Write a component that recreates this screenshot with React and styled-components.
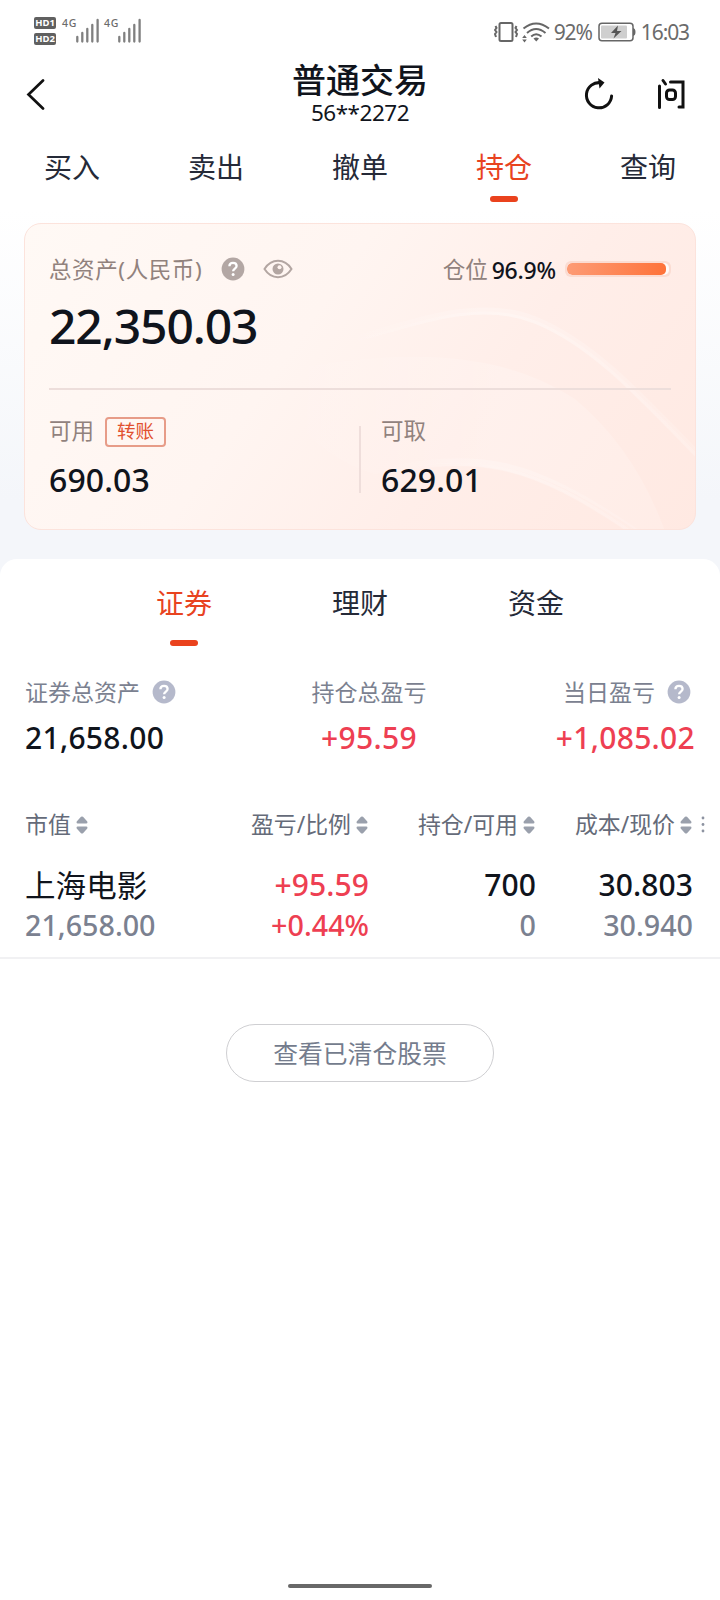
import React, { Fragment } from 'react';
import styled, { createGlobalStyle } from 'styled-components';

const GlobalStyle = createGlobalStyle`
  * { box-sizing: border-box; }
  body {
    margin: 0;
    background: #fff;
    color: #10141c;
    font-family: "Noto Sans", "Noto Sans CJK SC", sans-serif;
  }
`

const Page = styled.div`
  display: flex;
  flex-direction: column;
  width: 720px;
  height: 1600px;
  overflow: hidden;
  background: linear-gradient(180deg, #fff 210px, #f4f6fa 500px, #f4f6fa 600px);
`

const StatusBar = styled.div`
  display: flex;
  justify-content: space-between;
  height: 62px;
  padding: 0 31px 0 34px;
  color: #6b6b6b;
`

const StatusGroup = styled.div`
  display: flex;
  align-items: ${props => props.$align || 'flex-start'};
`

const HdStack = styled.div`
  display: flex;
  flex-direction: column;
  gap: 4px;
  padding-top: 17px;
`

const HdBadge = styled.span`
  width: 22px;
  height: 12px;
  border-radius: 2px;
  background: #606060;
  color: #fff;
  font-size: 9.5px;
  font-weight: 700;
  line-height: 12px;
  text-align: center;
`

const Network = styled.div`
  display: flex;
  width: 42px;
  padding: 17px 0 0 6px;
  margin-left: ${props => props.$left || 0}px;
  font-size: 10.5px;
  line-height: 12px;
  letter-spacing: 0.8px;
  font-weight: 500;
`

const StatusText = styled.span`
  font-size: 21px;
  line-height: 30px;
  letter-spacing: -1.1px;
  margin-left: ${props => props.$left};
`

const StatusIcons = styled(StatusGroup)`
  height: 62px;
  padding-top: 1px;
`

const Header = styled.header`
  display: grid;
  grid-template-columns: 160px 1fr 160px;
  height: 70px;
`

const HeaderSide = styled.div`
  display: flex;
  align-items: center;
  padding: ${props => props.$padding};
  gap: 40px;
`

const HeaderTitle = styled.div`
  display: flex;
  flex-direction: column;
  align-items: center;
`

const Title = styled.div`
  font-size: 34px;
  font-weight: 500;
  line-height: 36px;
`

const Account = styled.div`
  font-size: 22.5px;
  line-height: 30px;
  letter-spacing: -0.5px;
`

const Tabs = styled.nav`
  display: grid;
  grid-template-columns: repeat(${props => props.$count}, ${props => props.$width}px);
  justify-content: center;
  height: ${props => props.$height}px;
`

const Tab = styled.div`
  display: flex;
  flex-direction: column;
  align-items: center;
  gap: ${props => props.$gap}px;
  padding-top: ${props => props.$top}px;
  font-size: 28px;
  line-height: 32px;
  color: ${props => props.$active ? '#e8431f' : '#252a38'};

  &::after {
    content: '';
    width: 28px;
    height: 6px;
    border-radius: 3px;
    background: ${props => props.$active ? '#ea421d' : 'transparent'};
  }
`

const Card = styled.section`
  position: relative;
  height: 307px;
  margin: 0 24px;
  border: 1px solid #fce3dc;
  border-radius: 17px;
  padding: 0 24px;
  overflow: hidden;
  background: linear-gradient(125deg, #fff9f5 0%, #fff5f1 40%, #ffeee9 66%, #ffe9e2 100%);
`

const Waves = styled.svg`
  position: absolute;
  inset: 0;
`

const CardBody = styled.div`
  position: relative;
`

const CardTop = styled.div`
  display: flex;
  align-items: center;
  justify-content: space-between;
  height: 44px;
  margin-top: 23px;
`

const Row = styled.div`
  display: flex;
  align-items: center;
  gap: ${props => props.$gap || 0}px;
`

const CardLabel = styled.span`
  padding-top: 2px;
  font-size: 22.5px;
  line-height: 30px;
  letter-spacing: ${props => props.$spacing || 0};
  color: #91827d;
`

const CardIcons = styled(Row)`
  margin-left: 19px;
`

const Ratio = styled.span`
  font-size: 23px;
  font-weight: 500;
  line-height: 30px;
  letter-spacing: -0.2px;
  margin: 1px 9px 0 4px;
`

const Meter = styled.div`
  width: 106px;
  height: 16px;
  padding: 2px;
  border-radius: 6px;
  background: #fbdcd2;
`

const MeterTrack = styled.div`
  height: 12px;
  border-radius: 5px;
  background: #fffaf8;
  overflow: hidden;
`

const MeterFill = styled.div`
  height: 12px;
  border-radius: 5px;
  background: linear-gradient(100deg, #fd9c76, #fe7239);
`

const Total = styled.div`
  font-size: 48px;
  font-weight: 500;
  line-height: 60px;
  letter-spacing: -1.1px;
  margin: 5px 0 0;
`

const Divider = styled.div`
  height: 2px;
  margin-top: 32px;
  background: #eddedb;
`

const Halves = styled.div`
  display: grid;
  grid-template-columns: 310px 2px 1fr;
`

const HalfLine = styled.div`
  height: 67px;
  margin-top: 36px;
  background: #efdedb;
`

const Half = styled.div`
  padding: 24px 0 0 ${props => props.$left || 0}px;
`

const HalfLabel = styled(Row)`
  height: 34px;
  align-items: flex-start;
`

const Tag = styled.span`
  width: 61px;
  height: 30px;
  margin-top: 3px;
  border: 2px solid #e79c88;
  border-radius: 4px;
  color: #e1502f;
  font-size: 18.5px;
  line-height: 24px;
  text-align: center;
`

const HalfValue = styled.div`
  font-size: 32px;
  font-weight: 500;
  line-height: 40px;
  letter-spacing: 0.1px;
  margin-top: 12px;
`

const Sheet = styled.main`
  flex: 1;
  display: flex;
  flex-direction: column;
  align-items: stretch;
  margin-top: 29px;
  border-radius: 17px 17px 0 0;
  background: #fff;
`

const Stats = styled.div`
  display: grid;
  grid-template-columns: 228px 1fr 228px;
  height: 116px;
  padding: 1px 25px 0;
`

const Stat = styled.div`
  display: flex;
  flex-direction: column;
  align-items: ${props => props.$align};
  padding-left: ${props => props.$left || 0}px;
`

const StatLabel = styled(Row)`
  height: 30px;
  padding-right: ${props => props.$right || 0}px;
  font-size: 23px;
  line-height: 30px;
  color: #7b8190;
`

const StatValue = styled.div`
  font-size: 30px;
  font-weight: 500;
  line-height: 40px;
  margin-top: 11px;
  letter-spacing: 0.3px;
  color: ${props => props.$up ? '#ee3f52' : '#10141c'};
`

const Grid = styled.div`
  display: grid;
  grid-template-columns: 160px 183px 167px 157px 1fr;
  padding-left: 25px;
`

const HeadGrid = styled(Grid)`
  margin-top: 16px;
`

const HeadCell = styled(Row)`
  justify-content: ${props => props.$first ? 'flex-start' : 'flex-end'};
  height: 34px;
  font-size: 22.9px;
  line-height: 30px;
  color: #656b79;
`

const Holding = styled(Grid)`
  height: 117px;
  padding-top: 23px;
  border-bottom: 2px solid #f1f1f3;
`

const Cell = styled.div`
  text-align: ${props => props.$first ? 'left' : 'right'};
  margin-right: -1px;
  font-size: 30px;
  font-weight: 500;
  line-height: 40px;
  letter-spacing: 0.1px;
  white-space: nowrap;
  color: ${props => props.$up ? '#ee3f52' : '#10141c'};
`

const StockName = styled.div`
  font-size: 30.5px;
  font-weight: 400;
`

const SubValue = styled.div`
  font-size: 28.7px;
  letter-spacing: 0;
  color: ${props => props.$up ? '#ee3f52' : '#7b8190'};
`

const ClearedButton = styled.button`
  align-self: center;
  width: 268px;
  height: 58px;
  margin-top: 65px;
  padding: 0;
  border: 1px solid #cfcfd2;
  border-radius: 29px;
  background: #fff;
  color: #747c8d;
  font-family: inherit;
  font-size: 24.8px;
  line-height: 32px;
`

const HomeBar = styled.div`
  align-self: center;
  width: 144px;
  height: 4px;
  margin: auto 0 12px;
  border-radius: 2px;
  background: #686868;
`

const SignalWrap = styled.div`
  margin: 17px 0 0 -22px;
  width: 24px;
`

const Signal = () => (
  <SignalWrap>
    <svg width="24" height="26" viewBox="0 0 24 26">
      <path d="M1.300 20v4.500M6.300 16v8.500M11.300 12v12.500M16.300 8v16.500M21.600 3v21.500" stroke="#808080" strokeWidth="2.300" strokeLinecap="round" />
    </svg>
  </SignalWrap>
)

const Help = ({ color }) => (
  <svg width="24" height="24" viewBox="0 0 24 24">
    <circle cx="12" cy="12" r="11.400" fill={color} />
    <path d="M8.400 9.300c0-2.100 1.500-3.500 3.600-3.500s3.600 1.300 3.600 3.200c0 2.500-3.500 2.700-3.500 5.300" fill="none" stroke="#fff" strokeWidth="2.300" />
    <circle cx="12.100" cy="17.600" r="1.500" fill="#fff" />
  </svg>
)

const Eye = () => (
  <svg width="30" height="20" viewBox="0 0 30 20" fill="none">
    <path d="M1.500 10C5 4.500 9.500 1.800 15 1.800S25 4.500 28.500 10C25 15.500 20.500 18.200 15 18.200S5 15.500 1.500 10z" stroke="#b3a6a2" strokeWidth="2" />
    <circle cx="15" cy="10" r="5.500" fill="#b3a6a2" />
    <circle cx="16.500" cy="8.200" r="2" fill="#fff4f0" />
  </svg>
)

const Sort = () => (
  <svg width="12" height="18" viewBox="0 0 12 18" fill="#9aa0ac">
    <path d="M5 .8Q6 0 7 .8L11.300 5.500Q12 7.500 10.500 7.500H1.500Q0 7.500.7 5.500zM5 17.200Q6 18 7 17.200L11.300 12.500Q12 10.500 10.500 10.500H1.500Q0 10.500.7 12.500z" />
  </svg>
)

const MoreDots = styled.svg`
  margin: 7px 0 0 9px;
`

const DeviceIcons = () => (
  <svg width="56" height="22" viewBox="0 0 56 22" fill="none" stroke="#666">
    <rect x="5.500" y="2" width="13" height="18" rx="1.500" strokeWidth="2" />
    <path d="M1.500 5l1 2-1.500 2 1.500 2-1.500 2 1 3M22.500 5l-1 2 1.500 2-1.500 2 1.500 2-1 3" strokeWidth="2" />
    <path d="M29.500 7.500Q42 -2.500 55 7.500M33 12Q42 4 51.500 12M37.200 15.500Q42 11 47.500 15.500" strokeWidth="2" />
    <path d="M39.500 17.500Q42.300 15.500 45 17.500L42.300 20.500z" fill="#666" stroke="none" />
    <path d="M28.200 17l2.300-3 2.300 3zM28.200 18.500l2.300 3 2.300-3z" fill="#666" stroke="none" />
  </svg>
)

const BatteryWrap = styled.div`
  display: flex;
  margin: 0 5px 0 6px;
`

const Battery = () => (
  <BatteryWrap>
    <svg width="38" height="20" viewBox="0 0 38 20">
      <rect x="1" y="1.200" width="34" height="17.600" rx="3" fill="none" stroke="#666" strokeWidth="1.500" />
      <rect x="3" y="3.500" width="26" height="13" rx="1" fill="#cfcfcf" />
      <path d="M35 6q2.500.5 2.500 4T35 14z" fill="#666" />
      <path d="M20 3.500L13 11h4.500l-2 5.500L23.500 9H19z" fill="#555" />
    </svg>
  </BatteryWrap>
)

const CardWaves = () => (
  <Waves width="672" height="307" viewBox="0 0 672 307" fill="none">
    <defs>
      <linearGradient id="edge" x1="0" x2="1">
        <stop offset="0" stopColor="#fff" stopOpacity="0" />
        <stop offset=".45" stopColor="#fff" stopOpacity=".22" />
        <stop offset="1" stopColor="#fff" stopOpacity=".12" />
      </linearGradient>
      <linearGradient id="band" x1="0" x2="1">
        <stop offset="0" stopColor="#fff" stopOpacity="0" />
        <stop offset=".6" stopColor="#fff" stopOpacity=".18" />
        <stop offset="1" stopColor="#fff" stopOpacity=".14" />
      </linearGradient>
    </defs>
    <path d="M240 150C390 120 480 130 550 175Q610 225 640 307H612C500 233 450 229 350 250Q280 230 240 150z" fill="url(#band)" />
    <g stroke="url(#edge)">
      <path d="M310 121C400 95 455 74 510 96S610 166 672 230" strokeWidth="7" />
      <path d="M310 123C400 97 455 76 510 98S610 168 672 232" strokeWidth="3" />
      <path d="M350 249C450 228 500 232 614 311" strokeWidth="8" />
      <path d="M350 251C450 230 500 234 612 312" strokeWidth="3" />
    </g>
  </Waves>
)

const mainTabs = ['买入', '卖出', '撤单', '持仓', '查询'];
const assetTabs = ['证券', '理财', '资金'];
const columns = ['市值', '盈亏/比例', '持仓/可用', '成本/现价'];

const App = () => {
  const position = 96.9;

  const main_tabs = mainTabs.map((name, key) =>
    <Tab $active={key === 3} $top={19} $gap={13} key={key}>{name}</Tab>
  );

  const asset_tabs = assetTabs.map((name, key) =>
    <Tab $active={key === 0} $top={28} $gap={21} key={key}>{name}</Tab>
  );

  const head_cells = columns.map((name, key) =>
    <HeadCell $first={key === 0} $gap={5} key={key}>{name}<Sort /></HeadCell>
  );

  return (
    <Fragment>
      <GlobalStyle />
      <Page lang="zh-CN">
        <StatusBar>
          <StatusGroup>
            <HdStack>
              <HdBadge>HD1</HdBadge>
              <HdBadge>HD2</HdBadge>
            </HdStack>
            <Network>4G</Network>
            <Signal />
            <Network $left={-2}>4G</Network>
            <Signal />
          </StatusGroup>
          <StatusIcons $align="center">
            <DeviceIcons />
            <StatusText $left="4px">92%</StatusText>
            <Battery />
            <StatusText>16:03</StatusText>
          </StatusIcons>
        </StatusBar>

        <Header>
          <HeaderSide $padding="0 0 6px 26px">
            <svg width="20" height="32" viewBox="0 0 20 32" fill="none">
              <path d="M17 2.500L2.500 16.500L17 30.500" stroke="#111" strokeWidth="2.700" strokeLinecap="round" />
            </svg>
          </HeaderSide>
          <HeaderTitle>
            <Title>普通交易</Title>
            <Account>56**2272</Account>
          </HeaderTitle>
          <HeaderSide $padding="0 0 6px 23px">
            <svg width="32" height="34" viewBox="0 0 32 34" fill="none" stroke="#111" strokeWidth="3">
              <path d="M18 5.800A12.600 12.600 0 1 0 28.600 19" strokeLinecap="round" />
              <path d="M15 1L21.500 5.500 16.500 11.500z" fill="#111" stroke="none" />
            </svg>
            <svg width="32" height="34" viewBox="0 0 32 34" fill="none" stroke="#111" strokeWidth="3" strokeLinecap="round">
              <path d="M4.500 9v21.500M8 3.500l2.500 3.500M15.500 5H28V30H24" />
              <rect x="11.500" y="13" width="9" height="9.500" rx="3" />
            </svg>
          </HeaderSide>
        </Header>

        <Tabs $count={5} $width={144} $height={91}>{main_tabs}</Tabs>

        <Card>
          <CardWaves />
          <CardBody>
            <CardTop>
              <Row>
                <CardLabel $spacing="0.6px">总资产(人民币)</CardLabel>
                <CardIcons $gap={18}>
                  <Help color="#b3a7a4" />
                  <Eye />
                </CardIcons>
              </Row>
              <Row>
                <CardLabel>仓位</CardLabel>
                <Ratio>{position}%</Ratio>
                <Meter>
                  <MeterTrack>
                    <MeterFill style={{ width: `${position}%` }} />
                  </MeterTrack>
                </Meter>
              </Row>
            </CardTop>
            <Total>22,350.03</Total>
            <Divider />
            <Halves>
              <Half>
                <HalfLabel $gap={11}>
                  <CardLabel>可用</CardLabel>
                  <Tag>转账</Tag>
                </HalfLabel>
                <HalfValue>690.03</HalfValue>
              </Half>
              <HalfLine />
              <Half $left={20}>
                <HalfLabel><CardLabel>可取</CardLabel></HalfLabel>
                <HalfValue>629.01</HalfValue>
              </Half>
            </Halves>
          </CardBody>
        </Card>

        <Sheet>
          <Tabs $count={3} $width={176} $height={117}>{asset_tabs}</Tabs>
          <Stats>
            <Stat $align="flex-start">
              <StatLabel $gap={12}>证券总资产<Help color="#b5b9cb" /></StatLabel>
              <StatValue>21,658.00</StatValue>
            </Stat>
            <Stat $align="center" $left={18}>
              <StatLabel>持仓总盈亏</StatLabel>
              <StatValue $up>+95.59</StatValue>
            </Stat>
            <Stat $align="flex-end">
              <StatLabel $gap={12} $right={4}>当日盈亏<Help color="#b5b9cb" /></StatLabel>
              <StatValue $up>+1,085.02</StatValue>
            </Stat>
          </Stats>

          <HeadGrid>
            {head_cells}
            <MoreDots width="4" height="20" viewBox="0 0 4 20" fill="#8d93a1">
              <circle cx="2" cy="3" r="1.400" />
              <circle cx="2" cy="9.500" r="1.400" />
              <circle cx="2" cy="16" r="1.400" />
            </MoreDots>
          </HeadGrid>
          <Holding>
            <Cell $first>
              <StockName>上海电影</StockName>
              <SubValue>21,658.00</SubValue>
            </Cell>
            <Cell $up>
              <div>+95.59</div>
              <SubValue $up>+0.44%</SubValue>
            </Cell>
            <Cell>
              <div>700</div>
              <SubValue>0</SubValue>
            </Cell>
            <Cell>
              <div>30.803</div>
              <SubValue>30.940</SubValue>
            </Cell>
          </Holding>

          <ClearedButton>查看已清仓股票</ClearedButton>
          <HomeBar />
        </Sheet>
      </Page>
    </Fragment>
  );
}

export default App;
